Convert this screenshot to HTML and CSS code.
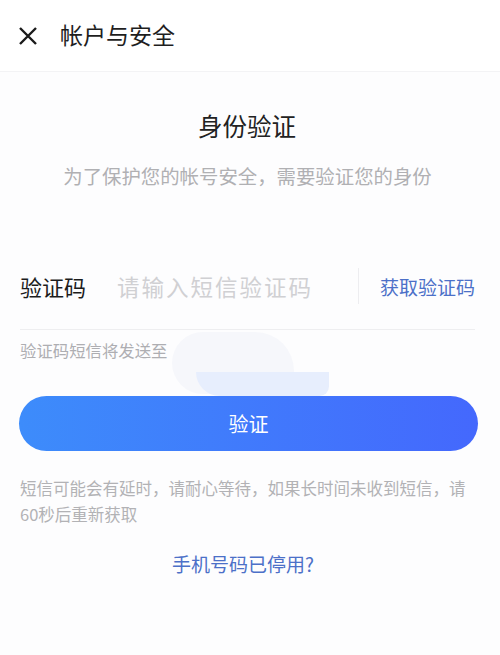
FILE: index.html
```html
<!DOCTYPE html>
<html lang="zh">
<head>
<meta charset="utf-8">
<link rel="stylesheet" href="styles.css">
</head>
<body>
<div class="page">
  <header class="topbar">
    <svg class="close" width="20" height="20" viewBox="0 0 20 20"><path d="M2 2 L18 18 M18 2 L2 18" stroke="#1a1a1a" stroke-width="2.4" fill="none"/></svg>
    <span class="topbar-title">帐户与安全</span>
  </header>
  <main class="content">
    <h1 class="title">身份验证</h1>
    <p class="subtitle">为了保护您的帐号安全，需要验证您的身份</p>
    <div class="code-row">
      <span class="code-label">验证码</span>
      <span class="code-input">请输入短信验证码</span>
      <span class="code-divider"></span>
      <span class="code-get">获取验证码</span>
    </div>
    <div class="send-to">
      <span>验证码短信将发送至</span>
      <span class="mask mask-light"></span>
      <span class="mask mask-blue"></span>
    </div>
    <button class="verify">验证</button>
    <p class="note">短信可能会有延时，请耐心等待，如果长时间未收到短信，请60秒后重新获取</p>
    <p class="stopped">手机号码已停用?</p>
  </main>
</div>
</body>
</html>
```
FILE: styles.css
```css
html, body {
  margin: 0;
  padding: 0;
  background: #fdfdfe;
}
body {
  font-family: "Noto Sans CJK SC", "Noto Sans", sans-serif;
  width: 500px;
  height: 655px;
  overflow: hidden;
}
.topbar {
  height: 72px;
  box-sizing: border-box;
  display: flex;
  align-items: center;
  padding-left: 18px;
  background: #ffffff;
  border-bottom: 1px solid #f3f3f5;
}
.close {
  display: block;
  margin-right: 22px;
}
.topbar-title {
  font-size: 23px;
  color: #1e1e1e;
  line-height: 1;
  margin-top: -2px;
}
.content {
  padding: 0 20px 0 20px;
  display: flex;
  flex-direction: column;
}
.title {
  margin: 37px 0 0 0;
  text-align: center;
  font-weight: 400;
  font-size: 24.5px;
  line-height: 34px;
  color: #222;
  padding-right: 6px;
}
.subtitle {
  margin: 19px 0 0 0;
  text-align: center;
  font-size: 19.4px;
  line-height: 28px;
  color: #b0b0b3;
  padding-right: 5px;
}
.code-row {
  margin-top: 78px;
  height: 36px;
  display: flex;
  align-items: center;
  border-bottom: 1px solid #eeeef0;
  margin-right: 5px;
  padding-bottom: 25px;
}
.code-label {
  font-size: 22px;
  color: #1c1c1c;
  width: 97px;
}
.code-input {
  font-size: 22.5px;
  color: #d0d0d3;
  letter-spacing: 2px;
  flex: 1;
}
.code-divider {
  width: 1px;
  height: 36px;
  background: #ededf0;
  margin-right: 21px;
}
.code-get {
  font-size: 19px;
  color: #4c70c8;
}
.send-to {
  display: flex;
  align-items: center;
  height: 40px;
  font-size: 16.4px;
  color: #aeaeb2;
  position: relative;
}
.mask {
  position: absolute;
}
.mask-light {
  left: 152px;
  top: 2px;
  width: 122px;
  height: 62px;
  background: #f6f7fb;
  border-radius: 40px 50px 20px 40px;
}
.mask-blue {
  left: 176px;
  top: 42px;
  width: 133px;
  height: 24px;
  background: #e7eefd;
  border-radius: 0 0 24px 60px;
}
.verify {
  margin-top: 26px;
  height: 55px;
  border: none;
  border-radius: 28px;
  background: linear-gradient(90deg, #3d8cfb 0%, #4468fd 100%);
  color: #ffffff;
  font-family: inherit;
  font-size: 20px;
  width: 459px;
  margin-left: -1px;
  position: relative;
}
.note {
  margin: 24px 0 0 0;
  font-size: 16.5px;
  line-height: 26px;
  color: #b2b2b5;
}
.stopped {
  margin: 23px 0 0 0;
  text-align: center;
  font-size: 19px;
  color: #4c70c8;
  line-height: 28px;
  padding-right: 14px;
}
```
